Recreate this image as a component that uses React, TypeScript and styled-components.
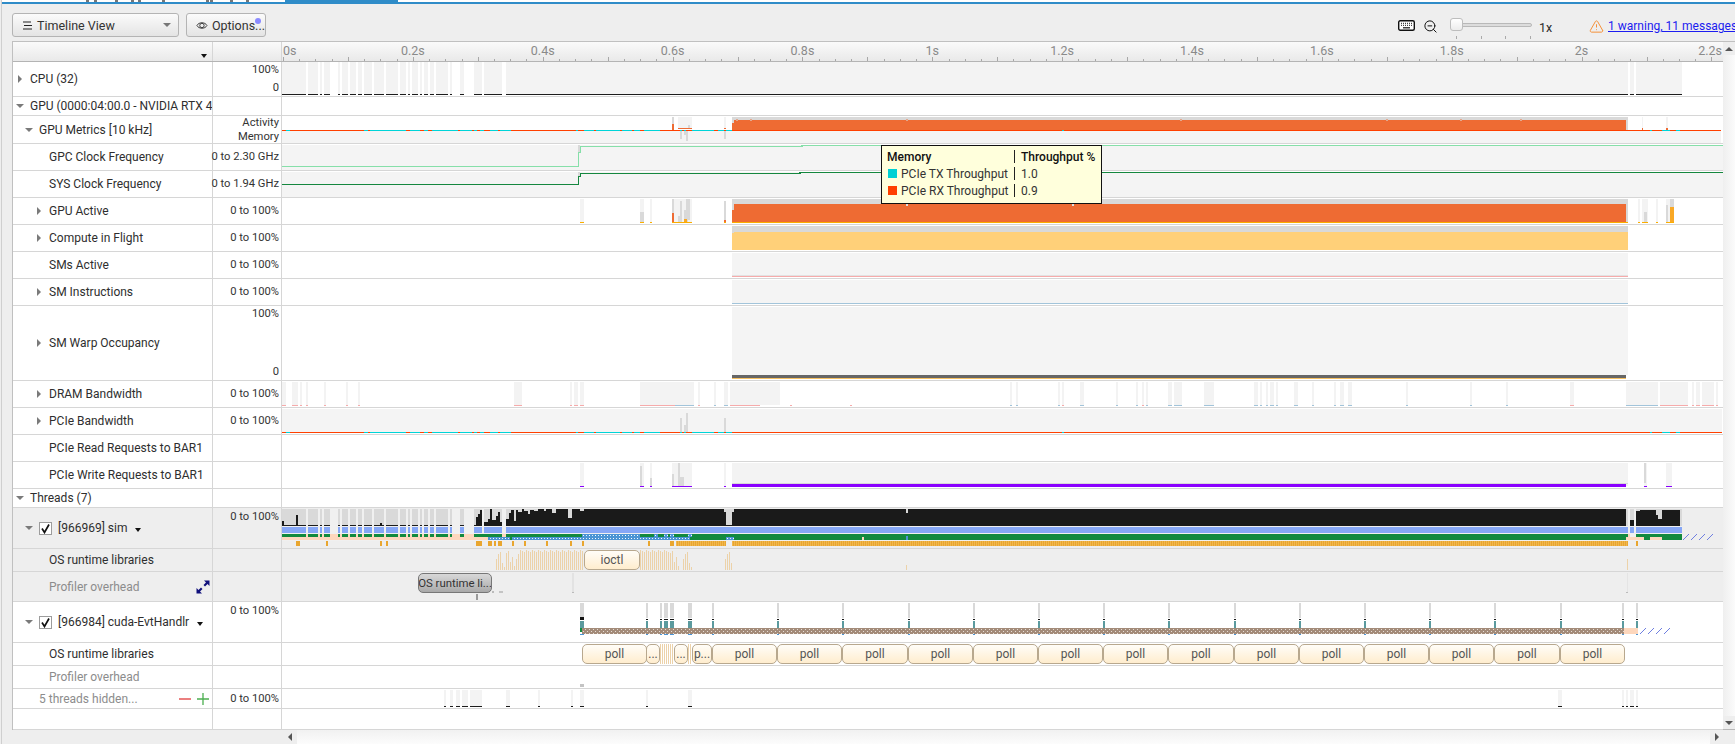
import React from 'react';
import styled, { createGlobalStyle } from 'styled-components';
import { ZoomOut, TriangleAlert } from 'lucide-react';

const GlobalStyle = createGlobalStyle`
  html, body { margin: 0; padding: 0; background: #eeeeee; }
  body { font-family: Roboto, "Liberation Sans", sans-serif; font-size: 12px; color: #2b2b2b; overflow: hidden; }
  * { box-sizing: border-box; }
`;

const Page = styled.div`
  width: 1735px;
  height: 744px;
  display: flex;
  flex-direction: column;
  border-left: 1px solid #cfcfcf;
  margin-left: 1px;
  overflow: hidden;
`;

const TabStrip = styled.div`
  height: 4px;
  background: linear-gradient(#fff 0 2px, #2f8cc8 2px 4px);
  display: flex;
`;

const TabSliver = styled.svg`
  display: block;
  flex: none;
`;

const ActiveTab = styled.div`
  width: 113px;
  height: 4px;
  background: #2f8cc8;
  flex: none;
`;

const Toolbar = styled.div`
  height: 37px;
  display: flex;
  align-items: flex-start;
  padding: 9px 0 0 10px;
  gap: 7px;
`;

const ToolButton = styled.div<{ $w: number }>`
  position: relative;
  width: ${p => p.$w}px;
  height: 24px;
  border: 1px solid #b4b4b4;
  border-radius: 3px;
  background: linear-gradient(#fbfbfb, #e4e4e4);
  display: flex;
  align-items: center;
  padding: 0 0 0 9px;
  gap: 4px;
  font-size: 12.5px;
  color: #333;
`;

const SelectArrow = styled.span`
  margin-left: auto;
  margin-right: 7px;
  border-left: 4px solid transparent;
  border-right: 4px solid transparent;
  border-top: 4px solid #777;
`;

const NotifyDot = styled.span`
  position: absolute;
  right: 4px;
  top: 4px;
  width: 6px;
  height: 6px;
  border-radius: 50%;
  background: #8a8aff;
`;

const ZoomGroup = styled.div`
  margin-left: auto;
  display: flex;
  align-items: flex-start;
  width: 338px;
  height: 28px;
  padding-top: 5px;
  white-space: nowrap;
`;

const KeyboardSlot = styled.div`
  width: 25px;
  flex: none;
  padding-top: 2px;
`;

const ZoomSlot = styled.div`
  width: 27px;
  flex: none;
  padding-top: 1px;
`;

const SliderBox = styled.div`
  width: 89px;
  flex: none;
  position: relative;
  height: 24px;
`;

const SliderTrack = styled.div`
  margin-top: 5px;
  width: 82px;
  height: 4px;
  border-radius: 2px;
  border: 1px solid #b8b8b8;
  background: #dcdcdc;
`;

const SliderThumb = styled.div`
  position: absolute;
  left: 0;
  top: 0;
  width: 13px;
  height: 13px;
  border: 1px solid #bdbdbd;
  border-radius: 3px;
  background: linear-gradient(#ffffff, #ececec);
`;

const SliderTicks = styled.div`
  width: 75px;
  margin: 9px 0 0 6px;
  height: 3px;
  display: flex;
  justify-content: space-between;
  & > i { width: 1px; background: #aaa; }
`;

const ZoomValue = styled.span`
  width: 50px;
  flex: none;
  font-size: 12.5px;
  padding-top: 2px;
`;

const WarnSlot = styled.span`
  flex: none;
  display: flex;
  padding-top: 1px;
`;

const WarnLink = styled.a`
  flex: none;
  color: #1c1cf0;
  text-decoration: underline;
  font-size: 12px;
  margin-left: 4px;
  padding-top: 1px;
`;

const Body = styled.div`
  display: flex;
  padding-left: 10px;
  height: 689px;
`;

const Table = styled.div`
  position: relative;
  width: 1711px;
  border-left: 1px solid #c0c0c0;
  border-top: 1px solid #c0c0c0;
  border-bottom: 1px solid #b8b8b8;
  display: flex;
  flex-direction: column;
  background: #fff;
`;

const Row = styled.div<{ $h: number; $shade?: boolean }>`
  height: ${p => p.$h}px;
  flex: none;
  display: grid;
  grid-template-columns: 200px 69px 1441px;
  border-bottom: 1px solid #d6d6d6;
  background: ${p => (p.$shade ? '#eeeeee' : '#ffffff')};
`;

const HeadRow = styled(Row)`
  border-bottom: 1px solid #b4b4b4;
  background: linear-gradient(#fafafa, #e9e9e9);
`;

const LabelCell = styled.div<{ $indent: number; $muted?: boolean }>`
  display: flex;
  align-items: center;
  padding-left: ${p => p.$indent}px;
  border-right: 1px solid #d6d6d6;
  white-space: nowrap;
  overflow: hidden;
  font-size: 12px;
  color: ${p => (p.$muted ? '#8c8c8c' : '#2e2e2e')};
`;

const HeadMenu = styled(LabelCell)`
  justify-content: flex-end;
  padding: 6px 5px 0 0;
`;

const ValueCell = styled.div<{ $top?: boolean; $split?: boolean }>`
  display: flex;
  flex-direction: column;
  align-items: flex-end;
  justify-content: ${p => (p.$split ? 'space-between' : p.$top ? 'flex-start' : 'center')};
  padding: ${p => (p.$top ? '2px' : p.$split ? '1px' : '0')} 2px ${p => (p.$split ? '1px' : '0')} 0;
  border-right: 1px solid #d6d6d6;
  font-size: 11.2px;
  line-height: 14px;
  color: #333;
  white-space: nowrap;
`;

const GraphCell = styled.div`
  position: relative;
  overflow: hidden;
`;

const ChartSvg = styled.svg`
  display: block;
`;

const Arrow = styled.span<{ $open?: boolean }>`
  flex: none;
  width: 8px;
  height: 8px;
  margin-right: 6px;
  position: relative;
  &::after {
    content: '';
    position: absolute;
    left: ${p => (p.$open ? 0 : 2)}px;
    top: ${p => (p.$open ? 2 : 0)}px;
    border-style: solid;
    border-color: transparent;
    border-width: ${p => (p.$open ? '4px 4px 0 4px' : '4px 0 4px 4px')};
    ${p => (p.$open ? 'border-top-color: #7a7a7a;' : 'border-left-color: #7a7a7a;')}
  }
`;

const Check = styled.span`
  flex: none;
  width: 13px;
  height: 13px;
  border: 1px solid #9c9c9c;
  background: #fff;
  margin-right: 6px;
  display: flex;
  align-items: center;
  justify-content: center;
`;

const MenuCaret = styled.span`
  margin-left: 8px;
  margin-top: 3px;
  border-left: 3.5px solid transparent;
  border-right: 3.5px solid transparent;
  border-top: 4px solid #111;
`;

const RowTools = styled.span`
  margin-left: auto;
  margin-right: 2px;
  display: flex;
  align-items: center;
`;

const Chip = styled.div`
  position: absolute;
  top: 1px;
  height: 20px;
  border: 1px solid #b8a88e;
  border-radius: 5px;
  background: linear-gradient(#fffdf8, #ffedce);
  color: #555;
  font-size: 12px;
  display: flex;
  align-items: center;
  justify-content: center;
  overflow: hidden;
  white-space: nowrap;
`;

const GreyChip = styled(Chip)`
  border-color: #777;
  background: linear-gradient(#d8d8d8, #a9a9a9);
  color: #333;
  font-size: 11.4px;
`;

const Tooltip = styled.div`
  position: absolute;
  left: 868px;
  top: 103px;
  width: 221px;
  height: 59px;
  background: #ffffdc;
  border: 1px solid #111;
  padding: 2px 0 0 5px;
  font-size: 12px;
  color: #333;
  z-index: 3;
`;

const TipRow = styled.div<{ $head?: boolean }>`
  display: flex;
  align-items: center;
  height: 17px;
  font-weight: ${p => (p.$head ? 500 : 400)};
  color: ${p => (p.$head ? '#111' : '#333')};
`;

const TipName = styled.div`
  width: 127px;
  display: flex;
  align-items: center;
  gap: 4px;
`;

const TipSwatch = styled.i<{ $c: string }>`
  width: 9px;
  height: 9px;
  margin-left: 1px;
  background: ${p => p.$c};
`;

const TipSep = styled.i`
  width: 1px;
  height: 13px;
  background: #222;
  margin-right: 6px;
`;

const VScroll = styled.div`
  width: 12px;
  border-top: 1px solid #c0c0c0;
  border-bottom: 1px solid #b8b8b8;
  display: flex;
  flex-direction: column;
  justify-content: space-between;
  background: linear-gradient(90deg, #efefef, #fbfbfb);
`;

const VBtn = styled.div`
  height: 13px;
  display: flex;
  align-items: center;
  justify-content: center;
  background: #eeeeee;
`;

const Footer = styled.div`
  height: 14px;
  padding-left: 281px;
  display: flex;
`;

const HScroll = styled.div`
  width: 1441px;
  display: flex;
  justify-content: space-between;
  background: linear-gradient(#f1f1f1, #fcfcfc);
`;

const HBtn = styled.div`
  width: 14px;
  display: flex;
  align-items: center;
  justify-content: center;
  background: #eeeeee;
`;

const Tri = styled.i<{ $dir: 'up' | 'down' | 'left' | 'right' }>`
  border-style: solid;
  border-color: transparent;
  ${p => {
    if (p.$dir === 'up') return 'border-width: 0 4px 4px 4px; border-bottom-color: #555;';
    if (p.$dir === 'down') return 'border-width: 4px 4px 0 4px; border-top-color: #555;';
    if (p.$dir === 'left') return 'border-width: 4px 4px 4px 0; border-right-color: #555;';
    return 'border-width: 4px 0 4px 4px; border-left-color: #555;';
  }}
`;

type Span = [number, number];

const rect = (a: number, b: number, y0: number, y1: number, fill: string) => (
  <rect x={a} y={y0} width={b - a} height={y1 - y0} fill={fill} />
);

const bars = (list: Span[], y0: number, y1: number, fill: string) =>
  list.map(([a, b], i) => <rect key={i} x={a} y={y0} width={b - a} height={y1 - y0} fill={fill} />);

const Chart = ({ top, h, children }: { top: number; h: number; children?: React.ReactNode }) => (
  <ChartSvg width={1441} height={h - 1} viewBox={`282 ${top} 1441 ${h - 1}`} shapeRendering="crispEdges">
    {children}
  </ChartSvg>
);

const timeX = (s: number) => 283 + s * 649.3;

const activity: Span[] = [
  [282, 306], [308, 318], [320, 322], [324, 330], [338, 340], [342, 348], [350, 356], [358, 362],
  [364, 372], [374, 384], [386, 398], [400, 406], [408, 410], [412, 418], [420, 422], [424, 428],
  [430, 434], [436, 448], [450, 452], [460, 464], [474, 482], [484, 502], [506, 1628], [1630, 1634],
  [1636, 1682],
];

const cyanSegs: Span[] = [
  [286, 290], [364, 368], [370, 406], [410, 420], [424, 428], [432, 458], [460, 472], [474, 477],
  [480, 484], [490, 498], [500, 511], [576, 578], [584, 594], [596, 620], [622, 632], [634, 640],
  [644, 660], [680, 682], [684, 686], [692, 714], [718, 724], [726, 732], [1062, 1064], [1650, 1652],
  [1662, 1670], [1676, 1680],
];

const dramBlue: Span[] = [
  [1010, 1012], [1016, 1018], [1058, 1060], [1080, 1084], [1116, 1118], [1136, 1138], [1146, 1148],
  [1168, 1172], [1174, 1182], [1204, 1214], [1254, 1258], [1260, 1262], [1266, 1268], [1270, 1274],
  [1276, 1278], [1294, 1298], [1312, 1314], [1334, 1336], [1340, 1344], [1348, 1352], [1406, 1408],
  [1470, 1472], [1506, 1508], [1626, 1658],
];

const dramPink: Span[] = [
  [282, 286], [292, 298], [300, 302], [306, 308], [324, 326], [346, 348], [358, 360], [514, 522],
  [570, 572], [574, 578], [580, 584], [640, 675], [698, 700], [730, 760], [790, 792], [850, 852],
  [1062, 1064], [1142, 1144], [1570, 1574], [1660, 1688], [1692, 1694], [1696, 1700], [1702, 1714],
  [1716, 1718],
];

const dramMid: Span[] = [[675, 694], [714, 716], [724, 728]];

const pollEdges = Array.from({ length: 15 }, (_, i) => 712 + 65.2 * i);
const cudaTicks = Array.from({ length: 14 }, (_, i) => 712 + 65.2 * i);

const peachBars = () => {
  const out: React.ReactNode[] = [];
  const sparse = [11, 16, 18, 7, 3, 17, 19, 8, 13, 4];
  const ranges: Span[] = [[496, 584], [640, 680], [683, 692], [725, 733]];
  ranges.forEach(([a, b]) => {
    for (let x = a, i = 0; x < b; x += 2, i++) {
      const early = x < 520 || x > 668 || a > 680;
      const hgt = early ? sparse[i % sparse.length] : 20 - (i % 3);
      out.push(<rect key={x} x={x} y={570 - hgt} width={1} height={hgt} fill="#ecd2a9" />);
    }
  });
  return out;
};

const Hatch = ({ x0, y }: { x0: number; y: number }) => (
  <>
    {[0, 8, 16, 24].map(d => (
      <line key={d} x1={x0 + d} y1={y + 6} x2={x0 + d + 6} y2={y} stroke="#6f7fe0" strokeWidth={1} shapeRendering="auto" />
    ))}
  </>
);

const labelsAt = [0.2, 0.4, 0.6, 0.8, 1, 1.2, 1.4, 1.6, 1.8, 2];

const AxisChart = () => {
  const ticks: React.ReactNode[] = [];
  for (let i = 0; i <= 88; i++) {
    const big = i % 4 === 0;
    const x = Math.round(timeX(i * 0.025));
    ticks.push(<rect key={i} x={x} y={big ? 56 : 58} width={1} height={big ? 4 : 2} fill="#a8a8a8" />);
  }
  return (
    <ChartSvg width={1441} height={19} viewBox="282 41 1441 19">
      <g shapeRendering="crispEdges">{ticks}</g>
      <text x={283} y={54} fontSize="12.5" fill="#8a8a8a">0s</text>
      {labelsAt.map(s => (
        <text key={s} x={timeX(s)} y={54} fontSize="12.5" fill="#8a8a8a" textAnchor="middle">{`${s}s`}</text>
      ))}
      <text x={1722} y={54} fontSize="12.5" fill="#8a8a8a" textAnchor="end">2.2s</text>
    </ChartSvg>
  );
};

const TimelineIcon = () => (
  <svg width="11" height="9" viewBox="0 0 11 9">
    <path d="M1 1h8M2 4.5h8M1 8h9" stroke="#222" strokeWidth="1.1" fill="none" />
  </svg>
);

const EyeIcon = () => (
  <svg width="13" height="11" viewBox="0 0 13 11" fill="none" stroke="#333" strokeWidth="1">
    <path d="M1 5.5C3 1.5 10 1.5 12 5.5 10 9.5 3 9.5 1 5.5z" />
    <circle cx="6.5" cy="5.5" r="2.4" />
  </svg>
);

const KeyboardIcon = () => (
  <svg width="17" height="11" viewBox="0 0 17 11">
    <rect x="0.7" y="0.7" width="15.6" height="9.6" rx="1.5" fill="#fff" stroke="#111" strokeWidth="1.4" />
    <path d="M3 3.3h11M3 5.3h11" stroke="#111" strokeWidth="1" strokeDasharray="1 1" />
    <path d="M5 7.8h7" stroke="#111" strokeWidth="1.2" />
  </svg>
);

const CheckIcon = () => (
  <svg width="11" height="11" viewBox="0 0 11 11">
    <path d="M2 5.5 4.5 9.5 9 1.5" fill="none" stroke="#111" strokeWidth="1.7" />
  </svg>
);

const ExpandIcon = () => (
  <svg width="14" height="14" viewBox="0 0 14 14" fill="#10107c">
    <path d="M8 0.5h5.5V6L11.5 4 9 6.5 7.5 5 10 2.5z" />
    <path d="M6 13.5H0.5V8L2.5 10 5 7.5 6.5 9 4 11.5z" />
  </svg>
);

const MinusPlus = () => (
  <svg width="31" height="14" viewBox="0 0 31 14">
    <path d="M0 7h12" stroke="#e03a3a" strokeWidth="1.3" />
    <path d="M18 7h12M24 1v12" stroke="#4caf50" strokeWidth="1.3" />
  </svg>
);

const patterns = (
  <svg width="0" height="0" style={{ position: 'absolute' }}>
    <defs>
      <pattern id="blueDots" width="6" height="3" patternUnits="userSpaceOnUse">
        <rect width="6" height="3" fill="#4b94d4" />
        <rect x="1" y="1" width="1" height="1" fill="#fff" />
        <rect x="4" y="1" width="1" height="1" fill="#dfeefa" />
      </pattern>
      <pattern id="brownDots" width="4" height="4" patternUnits="userSpaceOnUse">
        <rect width="4" height="4" fill="#a38b79" />
        <rect x="1" y="1" width="1" height="1" fill="#e6ddd6" />
        <rect x="3" y="3" width="1" height="1" fill="#e6ddd6" />
      </pattern>
      <pattern id="amberDash" width="2" height="5" patternUnits="userSpaceOnUse">
        <rect width="2" height="5" fill="#e9a62f" />
        <rect width="1" height="5" fill="#f0b750" />
      </pattern>
    </defs>
  </svg>
);

const simOrange: Span[] = [
  [296, 298], [298, 300], [326, 328], [380, 382], [386, 388], [476, 482], [488, 492], [494, 496],
  [498, 502], [512, 514], [524, 526], [546, 548], [570, 572], [582, 584], [648, 650], [670, 674],
  [676, 726], [732, 1628], [1636, 1638],
];

const simBlack: [number, number, number][] = [
  [282, 284, 521], [296, 298, 515], [380, 382, 523], [476, 478, 517], [478, 480, 514], [480, 482, 510],
  [484, 488, 522], [488, 490, 519], [490, 492, 509], [492, 496, 520], [496, 498, 516], [498, 500, 512],
  [500, 502, 522], [506, 509, 519], [509, 511, 513], [511, 514, 510], [514, 516, 521], [516, 518, 510],
  [518, 522, 512], [522, 524, 509], [524, 528, 511], [528, 530, 514], [530, 534, 510], [534, 538, 511],
  [538, 544, 509], [544, 546, 511], [546, 552, 509], [552, 556, 513], [556, 1626, 509],
  [1630, 1634, 520], [1636, 1640, 511], [1640, 1656, 510], [1656, 1658, 515],
  [1658, 1662, 519], [1662, 1680, 510],
];

const App = () => (
  <>
    <GlobalStyle />
    {patterns}
    <Page>
      <TabStrip>
        <TabSliver width={283} height={4} viewBox="0 0 283 4" shapeRendering="crispEdges">
          {[84, 92, 113, 129, 136, 160, 204, 208, 228, 244].map(x => (
            <rect key={x} x={x} y={0} width={3} height={1.5} fill="#777" />
          ))}
        </TabSliver>
        <ActiveTab />
      </TabStrip>
      <Toolbar>
        <ToolButton $w={167}>
          <TimelineIcon />
          Timeline View
          <SelectArrow />
        </ToolButton>
        <ToolButton $w={80}>
          <EyeIcon />
          Options...
          <NotifyDot />
        </ToolButton>
        <ZoomGroup>
          <KeyboardSlot>
            <KeyboardIcon />
          </KeyboardSlot>
          <ZoomSlot>
            <ZoomOut size={15} color="#111" strokeWidth={1.6} />
          </ZoomSlot>
          <SliderBox>
            <SliderTrack />
            <SliderThumb />
            <SliderTicks>
              <i />
              <i />
              <i />
              <i />
            </SliderTicks>
          </SliderBox>
          <ZoomValue>1x</ZoomValue>
          <WarnSlot>
            <TriangleAlert size={15} color="#f58a2c" strokeWidth={1.5} />
          </WarnSlot>
          <WarnLink>1 warning, 11 messages</WarnLink>
        </ZoomGroup>
      </Toolbar>
      <Body>
        <Table>
          <HeadRow $h={20}>
            <HeadMenu $indent={0}>
              <MenuCaret />
            </HeadMenu>
            <ValueCell />
            <GraphCell>
              <AxisChart />
            </GraphCell>
          </HeadRow>

          <Row $h={35}>
            <LabelCell $indent={3}><Arrow />CPU (32)</LabelCell>
            <ValueCell $split><span>100%</span><span>0</span></ValueCell>
            <GraphCell>
              <Chart top={62} h={35}>
                {bars(activity, 62, 94, '#f3f3f3')}
                {bars(activity, 94, 95, '#1c1c1c')}
              </Chart>
            </GraphCell>
          </Row>

          <Row $h={19}>
            <LabelCell $indent={3}><Arrow $open />GPU (0000:04:00.0 - NVIDIA RTX 4</LabelCell>
            <ValueCell />
            <GraphCell />
          </Row>

          <Row $h={28}>
            <LabelCell $indent={12}><Arrow $open />GPU Metrics [10 kHz]</LabelCell>
            <ValueCell><span>Activity</span><span>Memory</span></ValueCell>
            <GraphCell>
              <Chart top={116} h={28}>
                {rect(282, 1721, 131, 143, '#f4f4f4')}
                {rect(672, 674, 117, 124, '#d9d9d9')}
                {rect(672, 674, 124, 130, '#ee6b33')}
                {rect(678, 692, 117, 128, '#f3f3f3')}
                {rect(688, 690, 125, 128, '#d9d9d9')}
                {rect(678, 692, 128, 129, '#ee6b33')}
                {rect(680, 682, 131, 139, '#d9d9d9')}
                {rect(684, 686, 131, 135, '#d9d9d9')}
                {rect(686, 688, 131, 141, '#d9d9d9')}
                {rect(724, 726, 117, 128, '#f3f3f3')}
                {rect(724, 726, 128, 129, '#ee6b33')}
                {rect(724, 726, 131, 139, '#d9d9d9')}
                {rect(732, 1628, 117, 130, '#d9d9d9')}
                {rect(732, 734, 123, 130, '#ee6b33')}
                {rect(734, 1626, 120, 130, '#ee6b33')}
                {bars([[736, 738], [750, 752], [906, 908], [1180, 1182], [1386, 1388], [1460, 1462], [1520, 1522]], 119, 121, '#e2a88f')}
                {rect(1642, 1643, 117, 130, '#f3f3f3')}
                {rect(1642, 1643, 128, 130, '#ee6b33')}
                {rect(1666, 1668, 117, 129, '#f3f3f3')}
                {rect(1666, 1668, 128, 130, '#ee6b33')}
                {rect(282, 1721, 130, 131, '#ff4000')}
                {bars(cyanSegs, 130, 131, '#00d4d8')}
              </Chart>
            </GraphCell>
          </Row>

          <Row $h={27}>
            <LabelCell $indent={36}>GPC Clock Frequency</LabelCell>
            <ValueCell>0 to 2.30 GHz</ValueCell>
            <GraphCell>
              <Chart top={144} h={27}>
                {rect(282, 1723, 145, 170, '#f4f4f4')}
                {rect(578, 580, 145, 152, '#d9d9d9')}
                <path d="M282 166.5H578.5V152.5H580.5V146.5H802V145.5H1723" fill="none" stroke="#86dfa9" strokeWidth="1.2" />
              </Chart>
            </GraphCell>
          </Row>

          <Row $h={27}>
            <LabelCell $indent={36}>SYS Clock Frequency</LabelCell>
            <ValueCell>0 to 1.94 GHz</ValueCell>
            <GraphCell>
              <Chart top={171} h={27}>
                {rect(282, 1723, 172, 197, '#f4f4f4')}
                {rect(578, 580, 172, 176, '#d9d9d9')}
                <path d="M282 184.5H578.5V176.5H580.5V173.5H800V172.5H1723" fill="none" stroke="#15873f" strokeWidth="1.2" />
              </Chart>
            </GraphCell>
          </Row>

          <Row $h={27}>
            <LabelCell $indent={22}><Arrow />GPU Active</LabelCell>
            <ValueCell>0 to 100%</ValueCell>
            <GraphCell>
              <Chart top={198} h={27}>
                {bars([[580, 584], [640, 644], [650, 652], [674, 692], [1638, 1640], [1642, 1648], [1656, 1658], [1666, 1674]], 199, 222, '#f3f3f3')}
                {rect(640, 644, 212, 222, '#d9d9d9')}
                {rect(672, 674, 199, 213, '#d9d9d9')}
                {rect(672, 674, 213, 222, '#ee6b33')}
                {rect(678, 680, 216, 222, '#d9d9d9')}
                {rect(680, 682, 201, 222, '#d9d9d9')}
                {rect(684, 688, 210, 222, '#d9d9d9')}
                {rect(686, 690, 199, 220, '#d9d9d9')}
                {rect(684, 687, 219, 222, '#f9a825')}
                {rect(724, 726, 201, 220, '#d9d9d9')}
                {rect(724, 726, 220, 222, '#ee6b33')}
                {rect(1644, 1647, 212, 222, '#d9d9d9')}
                {rect(1666, 1668, 205, 222, '#d9d9d9')}
                {rect(1670, 1674, 199, 207, '#d9d9d9')}
                {rect(1670, 1674, 207, 222, '#f9a825')}
                {rect(732, 1628, 199, 222, '#d9d9d9')}
                {rect(732, 734, 210, 222, '#ee6b33')}
                {rect(734, 1626, 204, 222, '#ee6b33')}
                {bars([[906, 908], [1072, 1074]], 204, 206, '#e0e0e0')}
                {bars([[580, 584], [640, 644], [650, 652], [672, 692], [724, 726], [732, 1628], [1638, 1640], [1642, 1648], [1656, 1658], [1666, 1674]], 222, 223, '#fbae00')}
              </Chart>
            </GraphCell>
          </Row>

          <Row $h={27}>
            <LabelCell $indent={22}><Arrow />Compute in Flight</LabelCell>
            <ValueCell>0 to 100%</ValueCell>
            <GraphCell>
              <Chart top={225} h={27}>
                {rect(732, 1628, 226, 250, '#d9d9d9')}
                {rect(732, 734, 233, 250, '#ffd079')}
                {rect(734, 1628, 232, 250, '#ffd079')}
              </Chart>
            </GraphCell>
          </Row>

          <Row $h={27}>
            <LabelCell $indent={36}>SMs Active</LabelCell>
            <ValueCell>0 to 100%</ValueCell>
            <GraphCell>
              <Chart top={252} h={27}>
                {rect(732, 1628, 253, 275, '#f4f4f4')}
                {rect(732, 1628, 275, 276, '#e2e2e2')}
                {rect(732, 1628, 276, 277, '#f6abab')}
              </Chart>
            </GraphCell>
          </Row>

          <Row $h={27}>
            <LabelCell $indent={22}><Arrow />SM Instructions</LabelCell>
            <ValueCell>0 to 100%</ValueCell>
            <GraphCell>
              <Chart top={279} h={27}>
                {rect(732, 1628, 280, 303, '#f4f4f4')}
                {rect(732, 1628, 303, 304, '#a2c4da')}
              </Chart>
            </GraphCell>
          </Row>

          <Row $h={75}>
            <LabelCell $indent={22}><Arrow />SM Warp Occupancy</LabelCell>
            <ValueCell $split><span>100%</span><span>0</span></ValueCell>
            <GraphCell>
              <Chart top={306} h={75}>
                {rect(732, 1628, 307, 375, '#f4f4f4')}
                {rect(732, 1626, 375, 378, '#666666')}
                {rect(732, 1626, 378, 379, '#f5c062')}
              </Chart>
            </GraphCell>
          </Row>

          <Row $h={27}>
            <LabelCell $indent={22}><Arrow />DRAM Bandwidth</LabelCell>
            <ValueCell>0 to 100%</ValueCell>
            <GraphCell>
              <Chart top={381} h={27}>
                {bars(dramPink, 382, 405, '#f3f3f3')}
                {bars(dramBlue, 382, 405, '#f3f3f3')}
                {bars(dramMid, 382, 405, '#f3f3f3')}
                {rect(732, 780, 382, 405, '#f3f3f3')}
                {rect(784, 1000, 382, 405, '#ffffff')}
                {bars(dramPink, 405, 406, '#f6abab')}
                {bars(dramBlue, 405, 406, '#a2c4da')}
                {bars(dramMid, 405, 406, '#a2c4da')}
              </Chart>
            </GraphCell>
          </Row>

          <Row $h={27}>
            <LabelCell $indent={22}><Arrow />PCIe Bandwidth</LabelCell>
            <ValueCell>0 to 100%</ValueCell>
            <GraphCell>
              <Chart top={408} h={27}>
                {rect(282, 1722, 409, 432, '#f4f4f4')}
                {rect(680, 682, 418, 432, '#d9d9d9')}
                {rect(684, 686, 425, 432, '#d9d9d9')}
                {rect(686, 688, 413, 432, '#d9d9d9')}
                {rect(724, 726, 418, 432, '#d9d9d9')}
                {rect(282, 1722, 432, 433, '#ff4000')}
                {bars(cyanSegs, 432, 433, '#00d4d8')}
              </Chart>
            </GraphCell>
          </Row>

          <Row $h={27}>
            <LabelCell $indent={36}>PCIe Read Requests to BAR1</LabelCell>
            <ValueCell />
            <GraphCell />
          </Row>

          <Row $h={27}>
            <LabelCell $indent={36}>PCIe Write Requests to BAR1</LabelCell>
            <ValueCell />
            <GraphCell>
              <Chart top={462} h={27}>
                {bars([[580, 584], [640, 644], [650, 652], [672, 692], [724, 726], [732, 1628], [1644, 1647], [1666, 1672]], 463, 486, '#f3f3f3')}
                {rect(640, 642, 466, 486, '#d9d9d9')}
                {rect(650, 652, 478, 486, '#d9d9d9')}
                {rect(672, 674, 474, 486, '#d9d9d9')}
                {rect(678, 680, 463, 486, '#d9d9d9')}
                {rect(680, 684, 477, 486, '#d9d9d9')}
                {rect(1644, 1646, 463, 483, '#d9d9d9')}
                {rect(732, 1628, 483, 484, '#d9d9d9')}
                {bars([[580, 584], [640, 644], [650, 652], [672, 692], [724, 726], [1644, 1647], [1666, 1672]], 486, 487, '#8a00ff')}
                {rect(732, 1626, 484, 487, '#8a00ff')}
              </Chart>
            </GraphCell>
          </Row>

          <Row $h={19}>
            <LabelCell $indent={3}><Arrow $open />Threads (7)</LabelCell>
            <ValueCell />
            <GraphCell />
          </Row>

          <Row $h={41} $shade>
            <LabelCell $indent={12}>
              <Arrow $open />
              <Check><CheckIcon /></Check>
              [966969] sim
              <MenuCaret />
            </LabelCell>
            <ValueCell $top>0 to 100%</ValueCell>
            <GraphCell>
              <Chart top={508} h={41}>
                {rect(282, 1723, 508, 548, '#eeeeee')}
                {rect(282, 1682, 509, 541, '#f0f0f0')}
                {bars(activity, 509, 526, '#d9d9d9')}
                {bars(activity.slice(0, 21), 525, 526, '#1c1c1c')}
                {simBlack.map(([a, b, t]) => (
                  <rect key={a} x={a} y={t} width={b - a} height={526 - t} fill="#1a1a1a" />
                ))}
                {rect(568, 572, 509, 518, '#d9d9d9')}
                {rect(580, 584, 509, 511, '#d9d9d9')}
                {rect(724, 734, 509, 512, '#d9d9d9')}
                {rect(726, 732, 512, 525, '#d9d9d9')}
                {rect(906, 908, 509, 513, '#d9d9d9')}
                {bars(activity, 527, 533, '#86a7f6')}
                {rect(282, 488, 534, 540, '#fdd7bd')}
                {bars(activity.slice(0, 20), 534, 537, '#12893f')}
                {rect(474, 1628, 534, 540, '#12893f')}
                {rect(474, 488, 537, 540, '#fdd7bd')}
                {rect(502, 506, 534, 540, '#fdd7bd')}
                {rect(488, 510, 537, 540, 'url(#blueDots)')}
                {rect(512, 690, 537, 540, 'url(#blueDots)')}
                {rect(582, 640, 534, 537, 'url(#blueDots)')}
                {bars([[654, 658], [664, 668], [670, 674], [688, 692]], 534, 537, 'url(#blueDots)')}
                {rect(726, 734, 537, 540, 'url(#blueDots)')}
                {rect(862, 864, 537, 540, '#fdd7bd')}
                {rect(906, 908, 536, 540, '#4b94d4')}
                {rect(1626, 1644, 537, 540, '#fdd7bd')}
                {rect(1636, 1682, 534, 537, '#12893f')}
                {rect(1644, 1682, 537, 540, '#12893f')}
                {rect(1650, 1662, 537, 540, '#fdd7bd')}
                {rect(1628, 1630, 534, 540, '#fdd7bd')}
                <Hatch x0={1683} y={534} />
                {bars(simOrange.filter(s => s[0] < 676 || s[0] > 1630), 541, 546, '#e9a62f')}
                {rect(676, 726, 541, 546, 'url(#amberDash)')}
                {rect(732, 1628, 541, 546, 'url(#amberDash)')}
              </Chart>
            </GraphCell>
          </Row>

          <Row $h={23} $shade>
            <LabelCell $indent={36}>OS runtime libraries</LabelCell>
            <ValueCell />
            <GraphCell>
              <Chart top={549} h={23}>
                {peachBars()}
                {rect(906, 907, 565, 570, '#ecd2a9')}
                {rect(1627, 1628, 559, 570, '#ecd2a9')}
              </Chart>
              <Chip style={{ left: 584 - 282, width: 56 }}>ioctl</Chip>
            </GraphCell>
          </Row>

          <Row $h={30} $shade>
            <LabelCell $indent={36} $muted>
              Profiler overhead
              <RowTools><ExpandIcon /></RowTools>
            </LabelCell>
            <ValueCell />
            <GraphCell>
              <Chart top={572} h={30}>
                {rect(476, 478, 594, 600, '#999999')}
                {rect(492, 494, 591, 593, '#bbbbbb')}
                {rect(499, 503, 591, 593, '#c4c4c4')}
                {rect(572, 574, 573, 592, '#e2e2e2')}
                {rect(572, 574, 592, 593, '#bbbbbb')}
                {rect(1627, 1628, 573, 592, '#e4e4e4')}
                {rect(1626, 1628, 592, 593, '#bbbbbb')}
              </Chart>
              <GreyChip style={{ left: 418 - 282, width: 74 }}>OS runtime li...</GreyChip>
            </GraphCell>
          </Row>

          <Row $h={41}>
            <LabelCell $indent={12}>
              <Arrow $open />
              <Check><CheckIcon /></Check>
              [966984] cuda-EvtHandlr
              <MenuCaret />
            </LabelCell>
            <ValueCell $top>0 to 100%</ValueCell>
            <GraphCell>
              <Chart top={602} h={41}>
                {[580, 646, 660, 664, 670, 688, ...cudaTicks, 1622, 1636].map((x, i) => {
                  const w = x === 580 || x === 664 || x === 670 || x === 688 ? 4 : 2;
                  const px = Math.round(x);
                  return (
                    <g key={i}>
                      {rect(px, px + w, 603, 618, '#d9d9d9')}
                      {rect(px, px + w, x === 580 ? 617 : 619, 620, '#111111')}
                      {rect(px, px + w, 621, 628, '#5b9a9e')}
                      {rect(px, px + w, 634, 635, '#4b94d4')}
                    </g>
                  );
                })}
                {rect(582, 1624, 628, 634, 'url(#brownDots)')}
                {rect(580, 582, 628, 632, '#12893f')}
                {rect(1624, 1638, 628, 634, '#fdd7bd')}
                <Hatch x0={1640} y={628} />
              </Chart>
            </GraphCell>
          </Row>

          <Row $h={23}>
            <LabelCell $indent={36}>OS runtime libraries</LabelCell>
            <ValueCell />
            <GraphCell>
              <Chart top={643} h={23}>
                {[660, 662, 664, 666, 668, 670, 672, 688, 690].map(x => (
                  <rect key={x} x={x} y={644} width={1} height={20} fill="#ecd2a9" />
                ))}
              </Chart>
              <Chip style={{ left: 582 - 282, width: 65 }}>poll</Chip>
              <Chip style={{ left: 646 - 282, width: 14 }}>...</Chip>
              <Chip style={{ left: 674 - 282, width: 14 }}>...</Chip>
              <Chip style={{ left: 692 - 282, width: 20 }}>p...</Chip>
              {pollEdges.slice(0, -1).map((x, i) => (
                <Chip key={x} style={{ left: Math.round(x) - 282, width: Math.round(pollEdges[i + 1]) - Math.round(x) }}>poll</Chip>
              ))}
            </GraphCell>
          </Row>

          <Row $h={23}>
            <LabelCell $indent={36} $muted>Profiler overhead</LabelCell>
            <ValueCell />
            <GraphCell>
              <Chart top={666} h={23}>{rect(580, 584, 684, 687, '#c4c4c4')}</Chart>
            </GraphCell>
          </Row>

          <Row $h={20}>
            <LabelCell $indent={26} $muted>
              5 threads hidden...
              <RowTools><MinusPlus /></RowTools>
            </LabelCell>
            <ValueCell>0 to 100%</ValueCell>
            <GraphCell>
              <Chart top={689} h={20}>
                {bars([[444, 446], [450, 453], [456, 460], [462, 468], [470, 482], [506, 510], [538, 540], [571, 573], [580, 584], [646, 648], [688, 692], [1558, 1562], [1622, 1624], [1626, 1628], [1630, 1634], [1636, 1638]], 690, 706, '#f3f3f3')}
                {bars([[444, 446], [450, 453], [456, 460], [462, 468], [470, 482], [506, 510], [538, 540], [571, 573], [580, 584], [646, 648], [688, 692], [1558, 1562], [1622, 1624], [1626, 1628], [1630, 1634], [1636, 1638]], 706, 707, '#1c1c1c')}
              </Chart>
            </GraphCell>
          </Row>

          <Row $h={21}>
            <LabelCell $indent={0} />
            <ValueCell />
            <GraphCell />
          </Row>

          <Tooltip>
            <TipRow $head>
              <TipName>Memory</TipName>
              <TipSep />
              Throughput %
            </TipRow>
            <TipRow>
              <TipName><TipSwatch $c="#00d0d4" />PCIe TX Throughput</TipName>
              <TipSep />
              1.0
            </TipRow>
            <TipRow>
              <TipName><TipSwatch $c="#ff4000" />PCIe RX Throughput</TipName>
              <TipSep />
              0.9
            </TipRow>
          </Tooltip>
        </Table>
        <VScroll>
          <VBtn><Tri $dir="up" /></VBtn>
          <VBtn><Tri $dir="down" /></VBtn>
        </VScroll>
      </Body>
      <Footer>
        <HScroll>
          <HBtn><Tri $dir="left" /></HBtn>
          <HBtn><Tri $dir="right" /></HBtn>
        </HScroll>
      </Footer>
    </Page>
  </>
);

export default App;
